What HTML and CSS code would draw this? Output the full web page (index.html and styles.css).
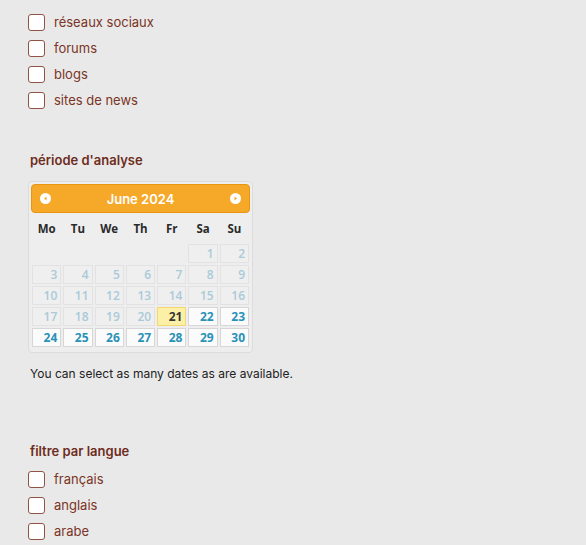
FILE: index.html
```html
<!DOCTYPE html>
<html lang="fr">
<head>
<meta charset="utf-8">
<link rel="stylesheet" href="styles.css">
</head>
<body>
<div class="page">
  <ul class="checks">
    <li><span class="box"></span>réseaux sociaux</li>
    <li><span class="box"></span>forums</li>
    <li><span class="box"></span>blogs</li>
    <li><span class="box"></span>sites de news</li>
  </ul>

  <h3 class="heading h-period">période d'analyse</h3>

  <div class="cal">
    <div class="cal-head">
      <span class="nav"><svg width="11" height="11" viewBox="0 0 11 11"><circle cx="5.5" cy="5.5" r="5.5" fill="#fff"/><path d="M6.5 3.5 L4 5.5 L6.5 7.5 Z" fill="#f6a828"/></svg></span>
      <span class="title">June 2024</span>
      <span class="nav"><svg width="11" height="11" viewBox="0 0 11 11"><circle cx="5.5" cy="5.5" r="5.5" fill="#fff"/><path d="M4.5 3.5 L7 5.5 L4.5 7.5 Z" fill="#f6a828"/></svg></span>
    </div>
    <table class="cal-table">
      <thead>
        <tr><th>Mo</th><th>Tu</th><th>We</th><th>Th</th><th>Fr</th><th>Sa</th><th>Su</th></tr>
      </thead>
      <tbody>
        <tr><td class="empty"></td><td class="empty"></td><td class="empty"></td><td class="empty"></td><td class="empty"></td><td><span class="d off">1</span></td><td><span class="d off">2</span></td></tr>
        <tr><td><span class="d off">3</span></td><td><span class="d off">4</span></td><td><span class="d off">5</span></td><td><span class="d off">6</span></td><td><span class="d off">7</span></td><td><span class="d off">8</span></td><td><span class="d off">9</span></td></tr>
        <tr><td><span class="d off">10</span></td><td><span class="d off">11</span></td><td><span class="d off">12</span></td><td><span class="d off">13</span></td><td><span class="d off">14</span></td><td><span class="d off">15</span></td><td><span class="d off">16</span></td></tr>
        <tr><td><span class="d off">17</span></td><td><span class="d off">18</span></td><td><span class="d off">19</span></td><td><span class="d off">20</span></td><td><span class="d today">21</span></td><td><span class="d on">22</span></td><td><span class="d on">23</span></td></tr>
        <tr><td><span class="d on">24</span></td><td><span class="d on">25</span></td><td><span class="d on">26</span></td><td><span class="d on">27</span></td><td><span class="d on">28</span></td><td><span class="d on">29</span></td><td><span class="d on">30</span></td></tr>
      </tbody>
    </table>
  </div>

  <p class="note">You can select as many dates as are available.</p>

  <h3 class="heading h-lang">filtre par langue</h3>
  <ul class="checks">
    <li><span class="box"></span>français</li>
    <li><span class="box"></span>anglais</li>
    <li><span class="box"></span>arabe</li>
  </ul>
</div>
</body>
</html>
```

FILE: styles.css
```css
html, body {
  margin: 0;
  padding: 0;
  background: #e9e9e9;
}
body {
  font-family: Inter, "Noto Sans", sans-serif;
  color: #7a3526;
}
.page {
  padding: 9px 0 0 28px;
}
.checks {
  list-style: none;
  margin: 0;
  padding: 0;
}
.checks li {
  display: flex;
  align-items: center;
  height: 26px;
  font-size: 13px;
  color: #7a3526;
}
.box {
  width: 15px;
  height: 15px;
  border: 1px solid #8f5446;
  border-radius: 3px;
  background: #fff;
  margin-right: 9px;
  flex: none;
}
.heading {
  margin: 0;
  font-size: 13px;
  font-weight: 600;
  line-height: 18px;
  color: #6e2c1d;
  padding-left: 2px;
}
.h-period {
  margin-top: 38px;
  margin-bottom: 12px;
}
.h-lang {
  margin-top: 60px;
  margin-bottom: 6px;
}
.cal {
  width: 219px;
  padding: 2px 2px 4px 2px;
  border: 1px solid #dcdcdc;
  border-radius: 4px;
  background: #eeeeee;
}
.cal-head {
  height: 27px;
  border: 1px solid #e8950f;
  border-radius: 4px;
  background: #f6a828;
  display: flex;
  align-items: center;
  justify-content: space-between;
  padding: 0 8px;
}
.nav {
  display: flex;
  width: 11px;
  height: 11px;
}
.title {
  color: #fff;
  font-weight: 600;
  font-size: 13px;
  font-family: Inter, "Noto Sans", sans-serif;
}
.cal-table {
  width: 100%;
  border-collapse: collapse;
  table-layout: fixed;
  font-family: "Open Sans", "DejaVu Sans", sans-serif;
}
.cal-table th {
  height: 30px;
  padding: 0;
  font-size: 11.5px;
  font-weight: 700;
  color: #2a2a2a;
  text-align: center;
}
.cal-table td {
  padding: 1px;
  height: 19px;
}
.d {
  display: block;
  box-sizing: border-box;
  height: 19px;
  line-height: 17px;
  border: 1px solid #e2e2e2;
  text-align: right;
  padding-right: 3px;
  font-size: 12px;
  font-weight: 700;
}
.off {
  background: #efefef;
  color: #aacad8;
  font-weight: 600;
}
.on {
  background: #fbfbfb;
  border-color: #d6d6d6;
  color: #2a91b8;
}
.today {
  background: #fcf0a6;
  border-color: #f5d670;
  color: #363636;
}
.note {
  margin: 13px 0 0 2px;
  font-size: 12px;
  line-height: 16px;
  color: #222;
}
```
